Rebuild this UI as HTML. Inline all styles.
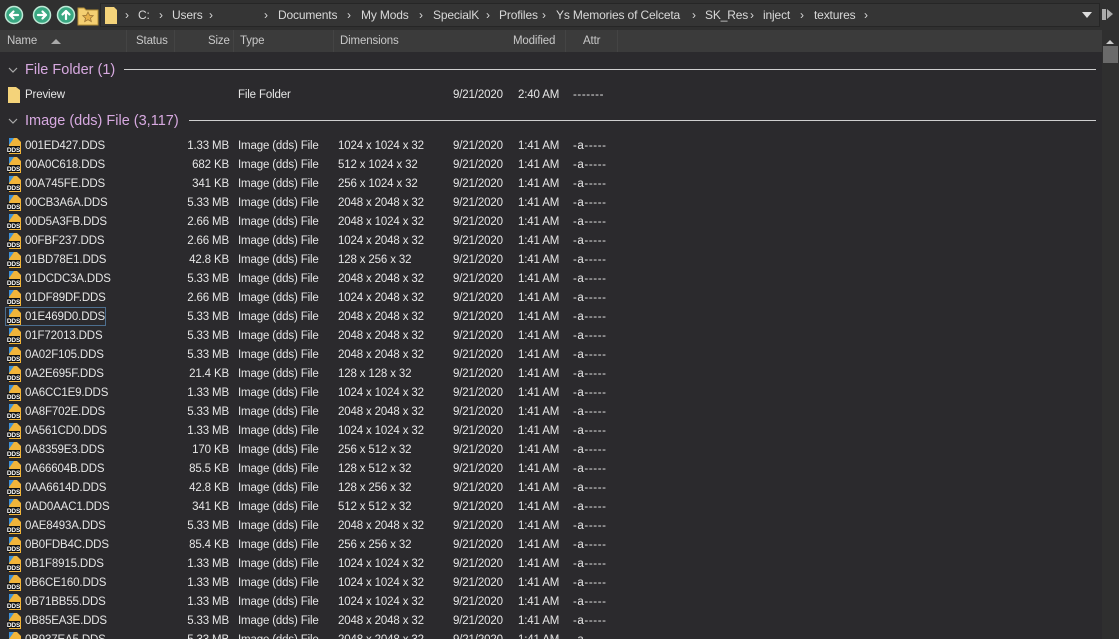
<!DOCTYPE html><html><head><meta charset="utf-8"><style>
*{margin:0;padding:0;box-sizing:border-box}
html,body{width:1119px;height:639px;overflow:hidden}
body{background:#2b2a2d;font-family:"Liberation Sans",sans-serif;font-size:11.5px;letter-spacing:-0.15px;color:#e6e6e6;position:relative}
.tb{position:absolute;left:0;top:0;width:1119px;height:30px;background:#303030}
.addr{position:absolute;left:100px;top:3px;width:1000px;height:24px;background:#353535;border:1px solid #262626}
.a{position:absolute;top:8px;font-size:12px;color:#d8d8d8;white-space:nowrap}
.hd{position:absolute;left:0;top:30px;width:1102px;height:22px;background:#3b3b3b}
.h{position:absolute;top:5px;color:#c8c8c8;font-size:11.5px}
.dv{position:absolute;top:30px;width:1px;height:22px;background:#444}
.sb{position:absolute;left:1102px;top:30px;width:17px;height:609px;background:#2f2f2f}
.g{position:absolute;color:#d7a9e0;font-size:14.5px;letter-spacing:0}
.ln{position:absolute;height:1px;background:#cfcfcf}
.r{position:absolute;left:0;height:19px;width:1100px}
.r span{position:absolute;top:4px;white-space:nowrap}
.n{left:25px}.s{right:871px;text-align:right}.t{left:238px}.d{left:338px}.m{left:453px}.tm{left:518px}.at{left:573px;letter-spacing:.6px}
.ic{position:absolute;left:7px;top:2px}
</style></head><body>
<div class="tb">
<svg style="position:absolute;left:4px;top:4px" width="96" height="22">
<g fill="#3aa882" stroke="#bfe9d6" stroke-width="1.5"><circle cx="10" cy="11" r="8.5"/><circle cx="38" cy="11" r="8.5"/><circle cx="62" cy="11" r="8.5"/></g>
<g stroke="#fff" stroke-width="2.2" fill="none" stroke-linecap="round" stroke-linejoin="round"><path d="M14 11H6M9.5 7.5L6 11l3.5 3.5"/><path d="M34 11h8M38.5 7.5L42 11l-3.5 3.5"/><path d="M62 15V7M58.5 10.5L62 7l3.5 3.5"/></g>
<path d="M74 4h6l2 2h12v15H74z" fill="#f4cf72" stroke="#b58f38"/><path d="M84 8l1.6 3.3 3.6.4-2.7 2.4.8 3.5-3.3-1.9-3.3 1.9.8-3.5-2.7-2.4 3.6-.4z" fill="#e6b14b" stroke="#9a7434" stroke-width=".8"/>
</svg>
<div class="addr"></div>
<svg style="position:absolute;left:104px;top:7px" width="14" height="17"><path d="M1 0h9l3 3v14H1z" fill="#f4d37a"/></svg>
<div class="a" style="left:125px">›</div><div class="a" style="left:138px">C:</div><div class="a" style="left:159px">›</div><div class="a" style="left:172px">Users</div><div class="a" style="left:209px">›</div>
<div class="a" style="left:264px">›</div><div class="a" style="left:278px">Documents</div><div class="a" style="left:347px">›</div><div class="a" style="left:361px">My Mods</div><div class="a" style="left:419px">›</div><div class="a" style="left:433px">SpecialK</div><div class="a" style="left:486px">›</div><div class="a" style="left:499px">Profiles</div><div class="a" style="left:542px">›</div><div class="a" style="left:556px">Ys Memories of Celceta</div><div class="a" style="left:692px">›</div><div class="a" style="left:705px">SK_Res</div><div class="a" style="left:750px">›</div><div class="a" style="left:763px">inject</div><div class="a" style="left:800px">›</div><div class="a" style="left:814px">textures</div><div class="a" style="left:864px">›</div>
<div style="position:absolute;left:1082px;top:12px;border-left:5px solid transparent;border-right:5px solid transparent;border-top:6px solid #ddd"></div>
<div style="position:absolute;left:1102px;top:9px;width:4px;height:11px;background:#aaa"></div><div style="position:absolute;left:1107px;top:9px;border-top:5.5px solid transparent;border-bottom:5.5px solid transparent;border-left:6px solid #aaa"></div>
</div>
<div class="hd"></div>
<div class="h" style="left:7px;top:35px">Name</div><div style="position:absolute;left:51px;top:39px;border-left:5px solid transparent;border-right:5px solid transparent;border-bottom:5px solid #aaa"></div>
<div class="h" style="left:136px;top:35px">Status</div><div class="h" style="left:208px;top:35px">Size</div><div class="h" style="left:240px;top:35px">Type</div><div class="h" style="left:340px;top:35px">Dimensions</div><div class="h" style="left:513px;top:35px">Modified</div><div class="h" style="left:583px;top:35px">Attr</div>
<div class="dv" style="left:126px"></div><div class="dv" style="left:174px"></div><div class="dv" style="left:233px"></div><div class="dv" style="left:333px"></div><div class="dv" style="left:565px"></div><div class="dv" style="left:617px"></div>
<div class="sb"><div style="position:absolute;left:4px;top:10px;border-left:4px solid transparent;border-right:4px solid transparent;border-bottom:4px solid #ccc"></div><div style="position:absolute;left:1px;top:16px;width:15px;height:17px;background:#6a6a6a"></div></div>
<svg style="position:absolute;left:8px;top:67px" width="10" height="7"><path d="M1 1l4 4 4-4" stroke="#aaa" stroke-width="1.2" fill="none"/></svg>
<div class="g" style="left:25px;top:62px">File Folder (1)</div><div class="ln" style="left:124px;top:69px;width:972px"></div>
<div class="r" style="top:85px"><svg class="ic" width="14" height="16"><path d="M1 0h8l4 3v13H1z" fill="#f4d37a"/></svg><span class="n">Preview</span><span class="t">File Folder</span><span class="m">9/21/2020</span><span class="tm">2:40 AM</span><span class="at">-------</span></div>
<svg style="position:absolute;left:8px;top:118px" width="10" height="7"><path d="M1 1l4 4 4-4" stroke="#aaa" stroke-width="1.2" fill="none"/></svg>
<div class="g" style="left:25px;top:113px">Image (dds) File (3,117)</div><div class="ln" style="left:189px;top:120px;width:907px"></div>
<svg width="0" height="0" style="position:absolute"><defs><g id="dd"><path d="M2 0h8l4 4v12H2z" fill="#f2b53a"/><path d="M2 0h5L2 7z" fill="#3c8fd8"/><rect x="0" y="8" width="13" height="7" fill="#111"/><text x="6.5" y="14" font-size="6.5" fill="#fff" text-anchor="middle" font-family="Liberation Sans" font-weight="bold">DDS</text></g></defs></svg>
<div class="r" style="top:136px"><svg class="ic" width="14" height="16"><use href="#dd"/></svg><span class="n">001ED427.DDS</span><span class="s">1.33 MB</span><span class="t">Image (dds) File</span><span class="d">1024 x 1024 x 32</span><span class="m">9/21/2020</span><span class="tm">1:41 AM</span><span class="at">-a-----</span></div>
<div class="r" style="top:155px"><svg class="ic" width="14" height="16"><use href="#dd"/></svg><span class="n">00A0C618.DDS</span><span class="s">682 KB</span><span class="t">Image (dds) File</span><span class="d">512 x 1024 x 32</span><span class="m">9/21/2020</span><span class="tm">1:41 AM</span><span class="at">-a-----</span></div>
<div class="r" style="top:174px"><svg class="ic" width="14" height="16"><use href="#dd"/></svg><span class="n">00A745FE.DDS</span><span class="s">341 KB</span><span class="t">Image (dds) File</span><span class="d">256 x 1024 x 32</span><span class="m">9/21/2020</span><span class="tm">1:41 AM</span><span class="at">-a-----</span></div>
<div class="r" style="top:193px"><svg class="ic" width="14" height="16"><use href="#dd"/></svg><span class="n">00CB3A6A.DDS</span><span class="s">5.33 MB</span><span class="t">Image (dds) File</span><span class="d">2048 x 2048 x 32</span><span class="m">9/21/2020</span><span class="tm">1:41 AM</span><span class="at">-a-----</span></div>
<div class="r" style="top:212px"><svg class="ic" width="14" height="16"><use href="#dd"/></svg><span class="n">00D5A3FB.DDS</span><span class="s">2.66 MB</span><span class="t">Image (dds) File</span><span class="d">2048 x 1024 x 32</span><span class="m">9/21/2020</span><span class="tm">1:41 AM</span><span class="at">-a-----</span></div>
<div class="r" style="top:231px"><svg class="ic" width="14" height="16"><use href="#dd"/></svg><span class="n">00FBF237.DDS</span><span class="s">2.66 MB</span><span class="t">Image (dds) File</span><span class="d">1024 x 2048 x 32</span><span class="m">9/21/2020</span><span class="tm">1:41 AM</span><span class="at">-a-----</span></div>
<div class="r" style="top:250px"><svg class="ic" width="14" height="16"><use href="#dd"/></svg><span class="n">01BD78E1.DDS</span><span class="s">42.8 KB</span><span class="t">Image (dds) File</span><span class="d">128 x 256 x 32</span><span class="m">9/21/2020</span><span class="tm">1:41 AM</span><span class="at">-a-----</span></div>
<div class="r" style="top:269px"><svg class="ic" width="14" height="16"><use href="#dd"/></svg><span class="n">01DCDC3A.DDS</span><span class="s">5.33 MB</span><span class="t">Image (dds) File</span><span class="d">2048 x 2048 x 32</span><span class="m">9/21/2020</span><span class="tm">1:41 AM</span><span class="at">-a-----</span></div>
<div class="r" style="top:288px"><svg class="ic" width="14" height="16"><use href="#dd"/></svg><span class="n">01DF89DF.DDS</span><span class="s">2.66 MB</span><span class="t">Image (dds) File</span><span class="d">1024 x 2048 x 32</span><span class="m">9/21/2020</span><span class="tm">1:41 AM</span><span class="at">-a-----</span></div>
<div class="r" style="top:307px"><div style="position:absolute;left:5px;top:0;width:101px;height:19px;border:1px solid #4d6f8f"></div><svg class="ic" width="14" height="16"><use href="#dd"/></svg><span class="n">01E469D0.DDS</span><span class="s">5.33 MB</span><span class="t">Image (dds) File</span><span class="d">2048 x 2048 x 32</span><span class="m">9/21/2020</span><span class="tm">1:41 AM</span><span class="at">-a-----</span></div>
<div class="r" style="top:326px"><svg class="ic" width="14" height="16"><use href="#dd"/></svg><span class="n">01F72013.DDS</span><span class="s">5.33 MB</span><span class="t">Image (dds) File</span><span class="d">2048 x 2048 x 32</span><span class="m">9/21/2020</span><span class="tm">1:41 AM</span><span class="at">-a-----</span></div>
<div class="r" style="top:345px"><svg class="ic" width="14" height="16"><use href="#dd"/></svg><span class="n">0A02F105.DDS</span><span class="s">5.33 MB</span><span class="t">Image (dds) File</span><span class="d">2048 x 2048 x 32</span><span class="m">9/21/2020</span><span class="tm">1:41 AM</span><span class="at">-a-----</span></div>
<div class="r" style="top:364px"><svg class="ic" width="14" height="16"><use href="#dd"/></svg><span class="n">0A2E695F.DDS</span><span class="s">21.4 KB</span><span class="t">Image (dds) File</span><span class="d">128 x 128 x 32</span><span class="m">9/21/2020</span><span class="tm">1:41 AM</span><span class="at">-a-----</span></div>
<div class="r" style="top:383px"><svg class="ic" width="14" height="16"><use href="#dd"/></svg><span class="n">0A6CC1E9.DDS</span><span class="s">1.33 MB</span><span class="t">Image (dds) File</span><span class="d">1024 x 1024 x 32</span><span class="m">9/21/2020</span><span class="tm">1:41 AM</span><span class="at">-a-----</span></div>
<div class="r" style="top:402px"><svg class="ic" width="14" height="16"><use href="#dd"/></svg><span class="n">0A8F702E.DDS</span><span class="s">5.33 MB</span><span class="t">Image (dds) File</span><span class="d">2048 x 2048 x 32</span><span class="m">9/21/2020</span><span class="tm">1:41 AM</span><span class="at">-a-----</span></div>
<div class="r" style="top:421px"><svg class="ic" width="14" height="16"><use href="#dd"/></svg><span class="n">0A561CD0.DDS</span><span class="s">1.33 MB</span><span class="t">Image (dds) File</span><span class="d">1024 x 1024 x 32</span><span class="m">9/21/2020</span><span class="tm">1:41 AM</span><span class="at">-a-----</span></div>
<div class="r" style="top:440px"><svg class="ic" width="14" height="16"><use href="#dd"/></svg><span class="n">0A8359E3.DDS</span><span class="s">170 KB</span><span class="t">Image (dds) File</span><span class="d">256 x 512 x 32</span><span class="m">9/21/2020</span><span class="tm">1:41 AM</span><span class="at">-a-----</span></div>
<div class="r" style="top:459px"><svg class="ic" width="14" height="16"><use href="#dd"/></svg><span class="n">0A66604B.DDS</span><span class="s">85.5 KB</span><span class="t">Image (dds) File</span><span class="d">128 x 512 x 32</span><span class="m">9/21/2020</span><span class="tm">1:41 AM</span><span class="at">-a-----</span></div>
<div class="r" style="top:478px"><svg class="ic" width="14" height="16"><use href="#dd"/></svg><span class="n">0AA6614D.DDS</span><span class="s">42.8 KB</span><span class="t">Image (dds) File</span><span class="d">128 x 256 x 32</span><span class="m">9/21/2020</span><span class="tm">1:41 AM</span><span class="at">-a-----</span></div>
<div class="r" style="top:497px"><svg class="ic" width="14" height="16"><use href="#dd"/></svg><span class="n">0AD0AAC1.DDS</span><span class="s">341 KB</span><span class="t">Image (dds) File</span><span class="d">512 x 512 x 32</span><span class="m">9/21/2020</span><span class="tm">1:41 AM</span><span class="at">-a-----</span></div>
<div class="r" style="top:516px"><svg class="ic" width="14" height="16"><use href="#dd"/></svg><span class="n">0AE8493A.DDS</span><span class="s">5.33 MB</span><span class="t">Image (dds) File</span><span class="d">2048 x 2048 x 32</span><span class="m">9/21/2020</span><span class="tm">1:41 AM</span><span class="at">-a-----</span></div>
<div class="r" style="top:535px"><svg class="ic" width="14" height="16"><use href="#dd"/></svg><span class="n">0B0FDB4C.DDS</span><span class="s">85.4 KB</span><span class="t">Image (dds) File</span><span class="d">256 x 256 x 32</span><span class="m">9/21/2020</span><span class="tm">1:41 AM</span><span class="at">-a-----</span></div>
<div class="r" style="top:554px"><svg class="ic" width="14" height="16"><use href="#dd"/></svg><span class="n">0B1F8915.DDS</span><span class="s">1.33 MB</span><span class="t">Image (dds) File</span><span class="d">1024 x 1024 x 32</span><span class="m">9/21/2020</span><span class="tm">1:41 AM</span><span class="at">-a-----</span></div>
<div class="r" style="top:573px"><svg class="ic" width="14" height="16"><use href="#dd"/></svg><span class="n">0B6CE160.DDS</span><span class="s">1.33 MB</span><span class="t">Image (dds) File</span><span class="d">1024 x 1024 x 32</span><span class="m">9/21/2020</span><span class="tm">1:41 AM</span><span class="at">-a-----</span></div>
<div class="r" style="top:592px"><svg class="ic" width="14" height="16"><use href="#dd"/></svg><span class="n">0B71BB55.DDS</span><span class="s">1.33 MB</span><span class="t">Image (dds) File</span><span class="d">1024 x 1024 x 32</span><span class="m">9/21/2020</span><span class="tm">1:41 AM</span><span class="at">-a-----</span></div>
<div class="r" style="top:611px"><svg class="ic" width="14" height="16"><use href="#dd"/></svg><span class="n">0B85EA3E.DDS</span><span class="s">5.33 MB</span><span class="t">Image (dds) File</span><span class="d">2048 x 2048 x 32</span><span class="m">9/21/2020</span><span class="tm">1:41 AM</span><span class="at">-a-----</span></div>
<div class="r" style="top:630px;height:9px;overflow:hidden"><svg class="ic" width="14" height="16"><use href="#dd"/></svg><span class="n">0B937EA5.DDS</span><span class="s">5.33 MB</span><span class="t">Image (dds) File</span><span class="d">2048 x 2048 x 32</span><span class="m">9/21/2020</span><span class="tm">1:41 AM</span><span class="at">-a-----</span></div>
</body></html>
